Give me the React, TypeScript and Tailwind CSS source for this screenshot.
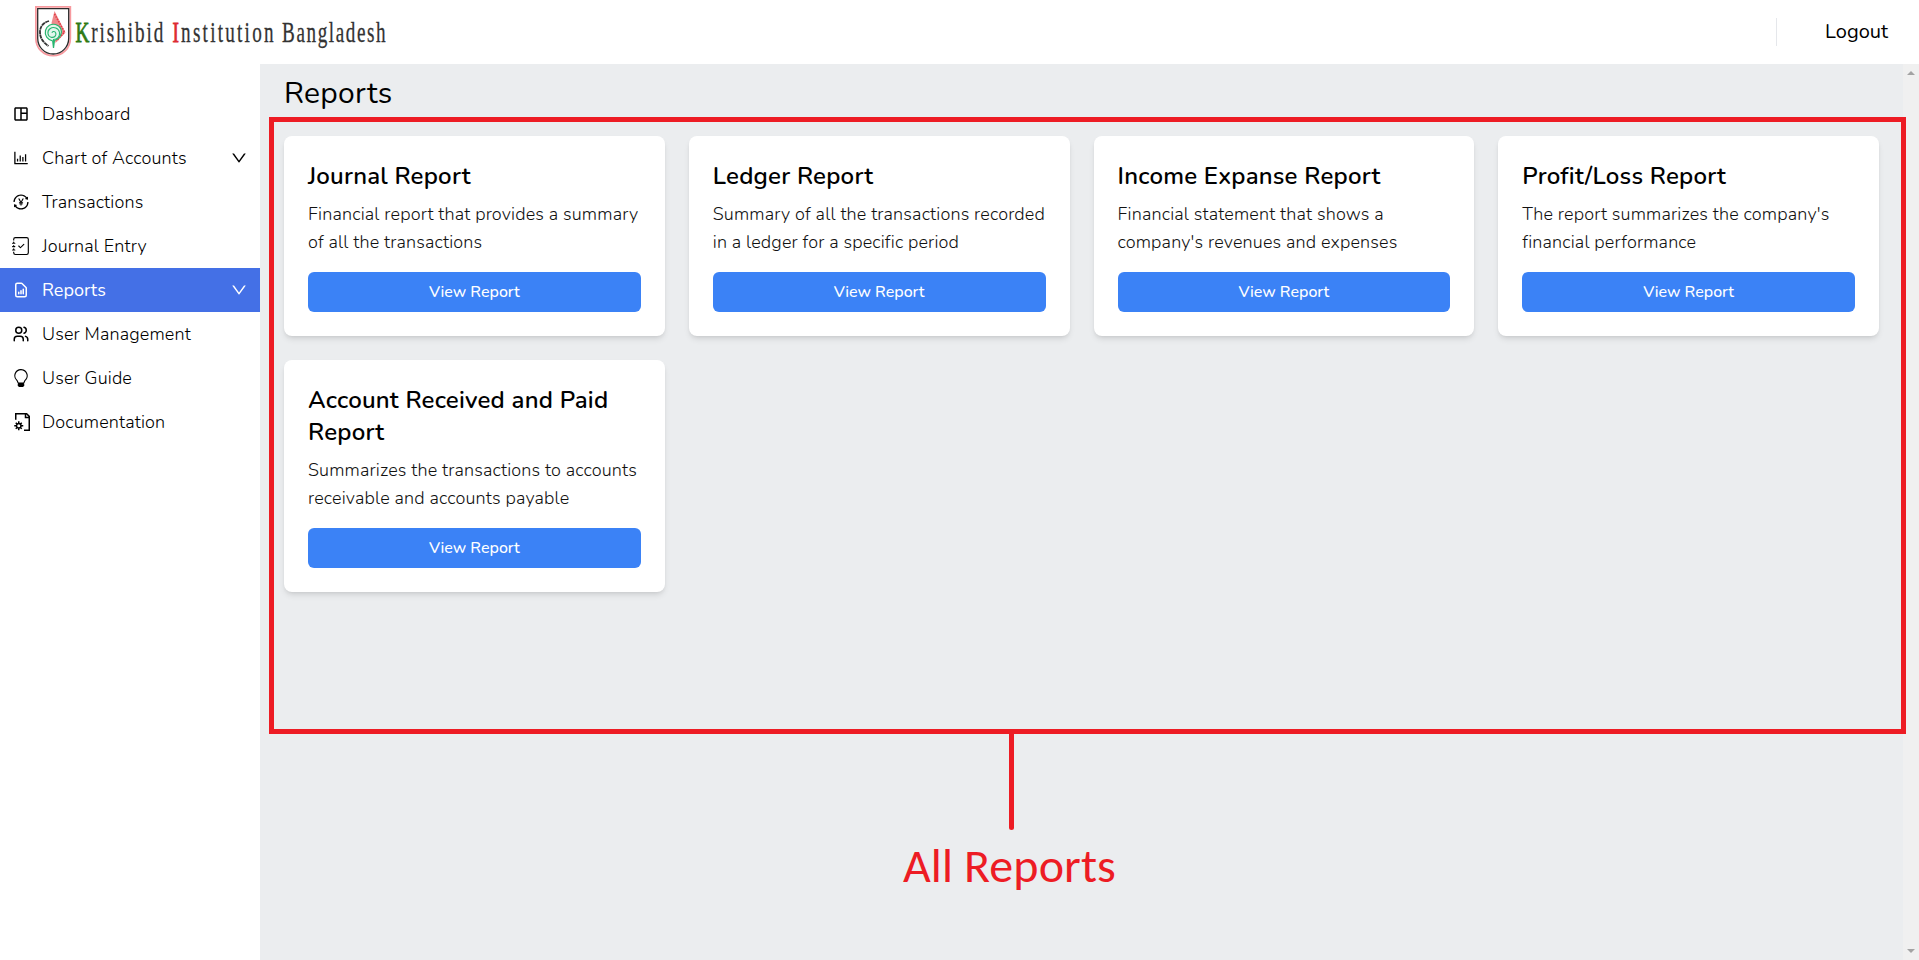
import type { IconType } from "react-icons";
import { MdOutlineSpaceDashboard } from "react-icons/md";
import { AiOutlineBarChart, AiOutlineDown, AiOutlineTransaction } from "react-icons/ai";
import { BsJournalCheck, BsLightbulb } from "react-icons/bs";
import { HiOutlineDocumentReport } from "react-icons/hi";
import { TbUsers } from "react-icons/tb";
import { GrDocumentConfig } from "react-icons/gr";

type NavItem = { label: string; icon: IconType; expandable?: boolean; active?: boolean };

const navItems: NavItem[] = [
  { label: "Dashboard", icon: MdOutlineSpaceDashboard },
  { label: "Chart of Accounts", icon: AiOutlineBarChart, expandable: true },
  { label: "Transactions", icon: AiOutlineTransaction },
  { label: "Journal Entry", icon: BsJournalCheck },
  { label: "Reports", icon: HiOutlineDocumentReport, expandable: true, active: true },
  { label: "User Management", icon: TbUsers },
  { label: "User Guide", icon: BsLightbulb },
  { label: "Documentation", icon: GrDocumentConfig },
];

const reports = [
  { title: "Journal Report", text: "Financial report that provides a summary of all the transactions" },
  { title: "Ledger Report", text: "Summary of all the transactions recorded in a ledger for a specific period" },
  { title: "Income Expanse Report", text: "Financial statement that shows a company's revenues and expenses" },
  { title: "Profit/Loss Report", text: "The report summarizes the company's financial performance" },
  { title: "Account Received and Paid Report", text: "Summarizes the transactions to accounts receivable and accounts payable" },
];

function Logo() {
  return (
    <svg width="360" height="64" viewBox="0 0 360 64" role="img" aria-label="Krishibid Institution Bangladesh">
      <path d="M.9 6.900h34.400v31.500c0 9.500-7.500 17.300-17.200 17.300S.9 47.900.9 38.400z" fill="#fff" stroke="#f79a9f" strokeWidth="1.800" />
      <path d="M2.700 8.600h31v29.600c0 8.700-6.800 15.800-15.500 15.800S2.700 46.900 2.700 38.200z" fill="#fff" stroke="#2b2b2b" strokeWidth="1.300" />
      <path d="M19.500 11l11 21.500-10 10.500-4-20z" fill="#ee8a8d" />
      <path d="M19.500 14l10 18-8 9" fill="none" stroke="#df3b43" strokeWidth="1.600" strokeDasharray="1.500 1.200" />
      <path d="M14 21C8.500 22.500 5 26.500 5 32c0 6.500 3.500 10.500 8.500 14" fill="none" stroke="#333" strokeWidth="1.800" strokeDasharray="4 .5" />
      <path d="M18.500 48l-.8-7c-5.200-1.500-8.400-5.500-7.200-10.500 1.200-4.900 6-7 10-6 5.200 1.300 7.300 6.500 5 11-1.300 2.500-3.500 4.200-6 5z" fill="#e3f6ec" stroke="#29b56f" strokeWidth="1.200" />
      <path d="M18.500 44v-4.500c4.500-.3 6.500-3.300 6-7-.7-4.200-5.800-6.500-9.500-3.800-3.300 2.500-2.500 7.500 1 8.500 3.200.9 5.500-1.400 4.800-4-.7-2-3.500-2.200-3.800-.4" fill="none" stroke="#29b56f" strokeWidth="1.100" />
      <g transform="translate(40.500 41.500) scale(.66 1)" fontFamily="'Liberation Serif', serif" fontSize="29" fill="#333" stroke="#333" strokeWidth=".3">
        <text x="0" y="0" textLength="133" lengthAdjust="spacing">
          <tspan fill="#2f7a14" stroke="#2f7a14" strokeWidth=".9">K</tspan>rishibid
        </text>
        <text x="147" y="0" textLength="153" lengthAdjust="spacing">
          <tspan fill="#dd2c33" stroke="#dd2c33" strokeWidth=".9">I</tspan>nstitution
        </text>
        <text x="313" y="0" textLength="157" lengthAdjust="spacing">Bangladesh</text>
      </g>
    </svg>
  );
}

function Header() {
  return (
    <header className="flex h-16 shrink-0 items-center justify-between bg-white pr-[31px] pl-[35px]">
      <Logo />
      <div className="flex items-center">
        <div className="h-7 w-px bg-gray-200" />
        <button className="ml-12 text-xl">Logout</button>
      </div>
    </header>
  );
}

function Sidebar() {
  return (
    <nav className="w-[260px] shrink-0 bg-white pt-7">
      {navItems.map(({ label, icon: Icon, expandable, active }) => (
        <a
          key={label}
          className={
            active
              ? "flex h-11 items-center bg-[#4470e6] px-3 text-lg text-white"
              : "flex h-11 items-center px-3 text-lg font-[350] tracking-[0.14px] text-black"
          }
        >
          <Icon size={18} />
          <span className="ml-3 grow">{label}</span>
          {expandable && <AiOutlineDown size={18} />}
        </a>
      ))}
    </nav>
  );
}

function ReportCard({ title, text }: { title: string; text: string }) {
  return (
    <article className="rounded-lg bg-white p-6 shadow-md">
      <h2 className="mb-2 text-2xl font-[620] tracking-[0.22px] text-black">{title}</h2>
      <p className="mb-4 text-lg leading-7 font-light tracking-[0.15px] text-[#111]">{text}</p>
      <button className="h-10 w-full rounded-md bg-[#3b82f6] text-base font-medium text-white">View Report</button>
    </article>
  );
}

function ScrollTrack() {
  return (
    <div className="flex w-4 shrink-0 flex-col items-center justify-between bg-[#f0f0f0] py-[7px]">
      <svg width="8" height="4" viewBox="0 0 8 4">
        <path d="M4 0l4 4H0z" fill="#a3a3a3" />
      </svg>
      <svg width="8" height="4" viewBox="0 0 8 4">
        <path d="M0 0h8L4 4z" fill="#a3a3a3" />
      </svg>
    </div>
  );
}

export default function App() {
  return (
    <div className="relative flex h-[960px] w-full flex-col overflow-hidden font-[Nunito,'Open_Sans',sans-serif] text-black">
      <Header />
      <div className="flex min-h-0 grow">
        <Sidebar />
        <main className="min-w-0 grow bg-[#ebedef] px-6 pt-3">
          <h1 className="mb-6 text-3xl leading-9 font-[450] tracking-[0.3px]">Reports</h1>
          <div className="grid grid-cols-4 items-start gap-6">
            {reports.map((report) => (
              <ReportCard key={report.title} {...report} />
            ))}
          </div>
        </main>
        <ScrollTrack />
      </div>
      <div className="pointer-events-none absolute top-[117px] left-[269px] h-[617px] w-[1637px] border-[5px] border-[#ed1c24]" />
      <div className="absolute top-[734px] left-[1009px] h-24 w-[5px] rounded-b-sm bg-[#ed1c24]" />
      <div className="absolute top-[836px] left-[903px] font-[Carlito,Lato,sans-serif] text-[48px] leading-[60px] tracking-[0.1px] whitespace-nowrap text-[#ed1c24]">
        All Reports
      </div>
    </div>
  );
}
